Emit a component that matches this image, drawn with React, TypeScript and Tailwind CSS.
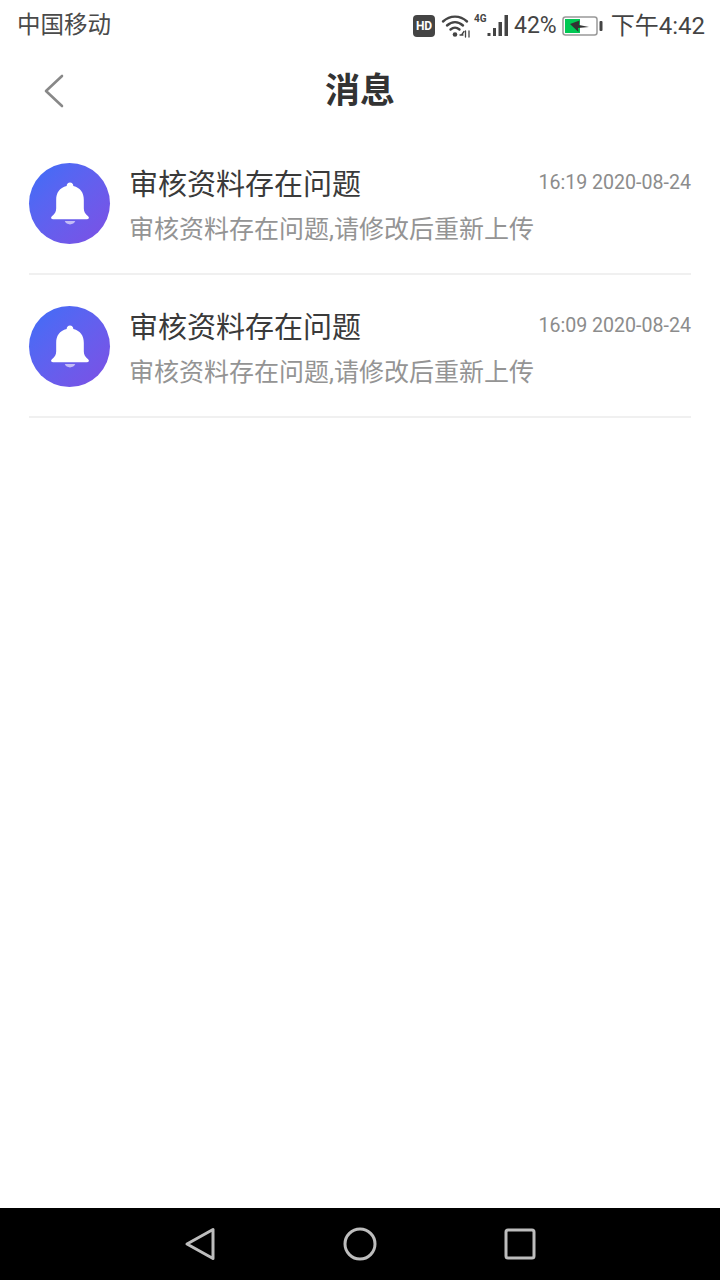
import React from 'react';

const CJK = "font-['Roboto','Noto_Sans_CJK_SC',sans-serif]";

const messages = [
  { id: 1, time: '16:19 2020-08-24' },
  { id: 2, time: '16:09 2020-08-24' },
];

const StatusIcons: React.FC = () => (
  <div className="flex items-center">
    <div className="w-[22px] h-[22px] rounded-[4px] bg-[#444] flex items-center justify-center text-white text-[12px] font-bold leading-none">
      HD
    </div>
    <svg width="30" height="24" viewBox="0 0 30 24" className="ml-[6px]" fill="none" stroke="#444" strokeLinecap="round">
      <path d="M2 7.500C9 1 19 1 26 7.500" strokeWidth="2.400" />
      <path d="M6 11.500C11 7 17 7 22 11.500" strokeWidth="2.400" />
      <path d="M9.500 15.500C12.500 13 15.500 13 18.500 15.500" strokeWidth="2.400" />
      <circle cx="14" cy="20.500" r="2.300" fill="#444" stroke="none" />
      <path d="M19 21h3M23 17.500l-2.500 3.500M24.500 17v6M28 17v6" strokeWidth="1.300" />
    </svg>
    <div className="flex items-start h-[24px] ml-[3px] w-[12px]">
      <span className="text-[#444] text-[10px] font-bold leading-none font-['Roboto',sans-serif]">4G</span>
    </div>
    <svg width="23" height="24" viewBox="0 0 23 24" fill="#444">
      <rect x="1.500" y="19" width="3" height="3" />
      <rect x="7" y="14" width="3" height="8" />
      <rect x="12.500" y="8" width="3.500" height="14" />
      <rect x="18.500" y="1" width="3.500" height="21" />
    </svg>
    <span className="text-[23px] text-[#444] leading-none ml-[5px]">42%</span>
    <svg width="42" height="20" viewBox="0 0 42 20" className="ml-[4px]" fill="none">
      <rect x="2" y="1" width="34" height="18" rx="2.500" stroke="#999" strokeWidth="1.500" />
      <rect x="4" y="3" width="15" height="14" fill="#00c853" />
      <path d="M9 8L18.500 4.500L18 9L28 11L17 12L17.500 16Z" fill="#333" />
      <rect x="38.500" y="5" width="3" height="10" rx="1" fill="#444" />
    </svg>
    <span className="text-[24px] text-[#444] leading-none ml-[8px]">下午4:42</span>
  </div>
);

const BellAvatar: React.FC = () => (
  <div className="w-[81px] h-[81px] shrink-0 rounded-full bg-gradient-to-br from-[#3a6ef8] to-[#7c4fe4] flex items-center justify-center">
    <svg width="40" height="45" viewBox="0 0 42 44">
      <path d="M21 0c2 0 3.500 1.500 3.500 3.600C32 5.300 35.500 11 35.500 18v9c0 4 1.500 6 4.500 8.500 1.500 1.300 1 3-1 3H3c-2 0-2.500-1.700-1-3C5 33 6.500 31 6.500 27v-9C6.500 11 10 5.300 17.500 3.600 17.500 1.500 19 0 21 0z" fill="#fff" />
      <path d="M15.500 40.500h11c-.8 2.200-3 3.500-5.500 3.500s-4.700-1.300-5.500-3.500z" fill="#c4bdf6" />
    </svg>
  </div>
);

const MessageRow: React.FC<{ time: string }> = ({ time }) => (
  <div className="h-[132px] mb-[11px] pt-[20px] mx-[29px] border-b-2 border-[#f0f0f0] flex items-start">
    <BellAvatar />
    <div className="ml-[19px] flex-1 min-w-0">
      <div className="flex items-start justify-between h-[45px]">
        <span className="text-[29px] leading-[44px] text-[#3a3a3a]">审核资料存在问题</span>
        <span className="text-[19.600px] leading-[40px] text-[#8c8c8c] font-['Roboto',sans-serif]">{time}</span>
      </div>
      <div className="text-[25px] leading-[44px] text-[#949494]">审核资料存在问题,请修改后重新上传</div>
    </div>
  </div>
);

export default function App() {
  return (
    <div className={`w-[720px] h-[1280px] bg-white flex flex-col overflow-hidden ${CJK}`}>
      <div className="h-[50px] pl-[17px] pr-[15px] pt-[1px] flex items-center justify-between shrink-0">
        <span className="text-[23.500px] text-[#4a4a4a] leading-none">中国移动</span>
        <StatusIcons />
      </div>
      <header className="h-[82px] shrink-0 relative flex items-center justify-center">
        <svg width="24" height="36" viewBox="0 0 24 36" fill="none" stroke="#888" strokeWidth="2.600" strokeLinecap="round" strokeLinejoin="round" className="absolute left-[42px] top-[23px]">
          <path d="M20 3L4 18l16 15" />
        </svg>
        <h1 className="text-[35px] font-bold text-[#333] leading-none">消息</h1>
      </header>
      <div className="flex-1 pt-[11px]">
        {messages.map((m) => (
          <MessageRow key={m.id} time={m.time} />
        ))}
      </div>
      <nav className="h-[72px] bg-black shrink-0 flex items-center justify-center gap-[112px]">
        <svg width="48" height="48" viewBox="0 0 48 48" fill="none" stroke="#bdbdbd" strokeWidth="3" strokeLinejoin="round">
          <path d="M11 24L37 9.500V38.500Z" />
        </svg>
        <svg width="48" height="48" viewBox="0 0 48 48" fill="none" stroke="#bdbdbd" strokeWidth="3">
          <circle cx="24" cy="24" r="15" />
        </svg>
        <svg width="48" height="48" viewBox="0 0 48 48" fill="none" stroke="#bdbdbd" strokeWidth="3" strokeLinejoin="round">
          <rect x="10" y="10" width="28" height="28" rx="2" />
        </svg>
      </nav>
    </div>
  );
}
